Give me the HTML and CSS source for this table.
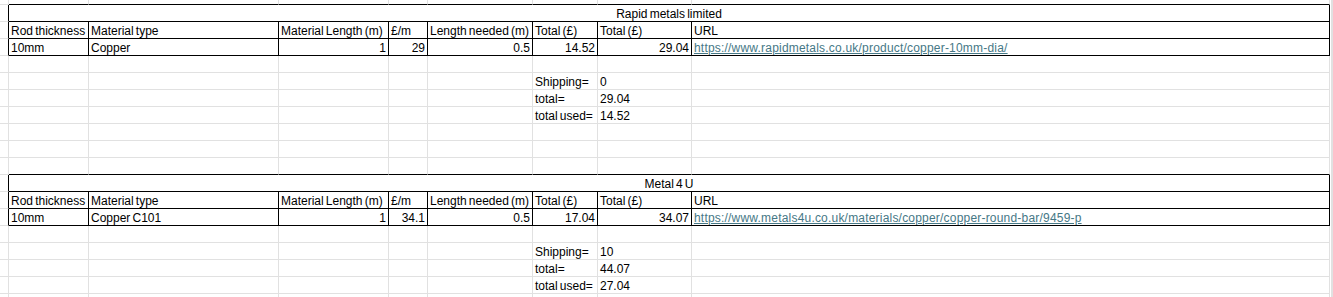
FILE: index.html
```html
<!DOCTYPE html>
<html>
<head>
<meta charset="utf-8">
<link rel="stylesheet" href="styles.css">
</head>
<body>
<div class="sheet">
  <div class="row short">
    <div class="c"></div><div class="c bt"></div><div class="c bt"></div><div class="c bt"></div><div class="c bt"></div><div class="c bt"></div><div class="c bt"></div><div class="c bt"></div><div class="c bt"></div><div class="edge"></div>
  </div>
  <div class="row">
    <div class="c bl"></div><div class="c tb title">Rapid metals limited</div><div class="edge"></div>
  </div>
  <div class="row">
    <div class="c bl"></div><div class="c tb">Rod thickness</div><div class="c tb">Material type</div><div class="c tb">Material Length (m)</div><div class="c tb">£/m</div><div class="c tb">Length needed (m)</div><div class="c tb">Total (£)</div><div class="c tb">Total (£)</div><div class="c tb">URL</div><div class="edge"></div>
  </div>
  <div class="row">
    <div class="c bl"></div><div class="c tb">10mm</div><div class="c tb">Copper</div><div class="c tb num">1</div><div class="c tb num">29</div><div class="c tb num">0.5</div><div class="c tb num">14.52</div><div class="c tb num">29.04</div><div class="c tb"><a class="link" href="#">https://www.rapidmetals.co.uk/product/copper-10mm-dia/</a></div><div class="edge"></div>
  </div>
  <div class="row">
    <div class="c"></div><div class="c"></div><div class="c"></div><div class="c"></div><div class="c"></div><div class="c"></div><div class="c"></div><div class="c"></div><div class="c"></div><div class="edge"></div>
  </div>
  <div class="row">
    <div class="c"></div><div class="c"></div><div class="c"></div><div class="c"></div><div class="c"></div><div class="c"></div><div class="c">Shipping=</div><div class="c">0</div><div class="c"></div><div class="edge"></div>
  </div>
  <div class="row">
    <div class="c"></div><div class="c"></div><div class="c"></div><div class="c"></div><div class="c"></div><div class="c"></div><div class="c">total=</div><div class="c">29.04</div><div class="c"></div><div class="edge"></div>
  </div>
  <div class="row">
    <div class="c"></div><div class="c"></div><div class="c"></div><div class="c"></div><div class="c"></div><div class="c"></div><div class="c">total used=</div><div class="c">14.52</div><div class="c"></div><div class="edge"></div>
  </div>
  <div class="row">
    <div class="c"></div><div class="c"></div><div class="c"></div><div class="c"></div><div class="c"></div><div class="c"></div><div class="c"></div><div class="c"></div><div class="c"></div><div class="edge"></div>
  </div>
  <div class="row">
    <div class="c"></div><div class="c"></div><div class="c"></div><div class="c"></div><div class="c"></div><div class="c"></div><div class="c"></div><div class="c"></div><div class="c"></div><div class="edge"></div>
  </div>
  <div class="row">
    <div class="c"></div><div class="c bt"></div><div class="c bt"></div><div class="c bt"></div><div class="c bt"></div><div class="c bt"></div><div class="c bt"></div><div class="c bt"></div><div class="c bt"></div><div class="edge"></div>
  </div>
  <div class="row">
    <div class="c bl"></div><div class="c tb title">Metal 4 U</div><div class="edge"></div>
  </div>
  <div class="row">
    <div class="c bl"></div><div class="c tb">Rod thickness</div><div class="c tb">Material type</div><div class="c tb">Material Length (m)</div><div class="c tb">£/m</div><div class="c tb">Length needed (m)</div><div class="c tb">Total (£)</div><div class="c tb">Total (£)</div><div class="c tb">URL</div><div class="edge"></div>
  </div>
  <div class="row">
    <div class="c bl"></div><div class="c tb">10mm</div><div class="c tb">Copper C101</div><div class="c tb num">1</div><div class="c tb num">34.1</div><div class="c tb num">0.5</div><div class="c tb num">17.04</div><div class="c tb num">34.07</div><div class="c tb"><a class="link" href="#">https://www.metals4u.co.uk/materials/copper/copper-round-bar/9459-p</a></div><div class="edge"></div>
  </div>
  <div class="row">
    <div class="c"></div><div class="c"></div><div class="c"></div><div class="c"></div><div class="c"></div><div class="c"></div><div class="c"></div><div class="c"></div><div class="c"></div><div class="edge"></div>
  </div>
  <div class="row">
    <div class="c"></div><div class="c"></div><div class="c"></div><div class="c"></div><div class="c"></div><div class="c"></div><div class="c">Shipping=</div><div class="c">10</div><div class="c"></div><div class="edge"></div>
  </div>
  <div class="row">
    <div class="c"></div><div class="c"></div><div class="c"></div><div class="c"></div><div class="c"></div><div class="c"></div><div class="c">total=</div><div class="c">44.07</div><div class="c"></div><div class="edge"></div>
  </div>
  <div class="row">
    <div class="c"></div><div class="c"></div><div class="c"></div><div class="c"></div><div class="c"></div><div class="c"></div><div class="c">total used=</div><div class="c">27.04</div><div class="c"></div><div class="edge"></div>
  </div>
  <div class="row">
    <div class="c"></div><div class="c"></div><div class="c"></div><div class="c"></div><div class="c"></div><div class="c"></div><div class="c"></div><div class="c"></div><div class="c"></div><div class="edge"></div>
  </div>
</div>
</body>
</html>
```
FILE: styles.css
```css
html, body {
  margin: 0;
  padding: 0;
  background: #ffffff;
}
body {
  width: 1333px;
  height: 297px;
  overflow: hidden;
  font-family: "Liberation Sans", Arial, sans-serif;
  font-size: 12px;
  color: #000000;
}
.sheet {
  display: flex;
  flex-direction: column;
  width: 1333px;
}
.row {
  display: grid;
  grid-template-columns: 9px 80px 190px 110px 39px 105px 65px 94px 638px 1fr;
  height: 17px;
  flex: none;
}
.row.short {
  height: 5px;
}
.c {
  box-sizing: border-box;
  border-right: 1px solid #e1e1e1;
  border-bottom: 1px solid #e1e1e1;
  padding: 2px 2px 0 2px;
  line-height: 14px;
  white-space: nowrap;
  overflow: hidden;
  word-spacing: -1.2px;
}
.edge {
  border-left: 1px solid #ffffff;
  background: #e1e1e1;
}
.bl {
  border-right-color: #000000;
}
.bt {
  border-bottom-color: #000000;
}
.tb {
  border-right-color: #000000;
  border-bottom-color: #000000;
}
.title {
  grid-column: span 8;
  text-align: center;
}
.num {
  text-align: right;
}
.link {
  color: #467886;
  text-decoration: underline;
  text-underline-offset: 1px;
  word-spacing: normal;
  letter-spacing: 0.2px;
}
```
